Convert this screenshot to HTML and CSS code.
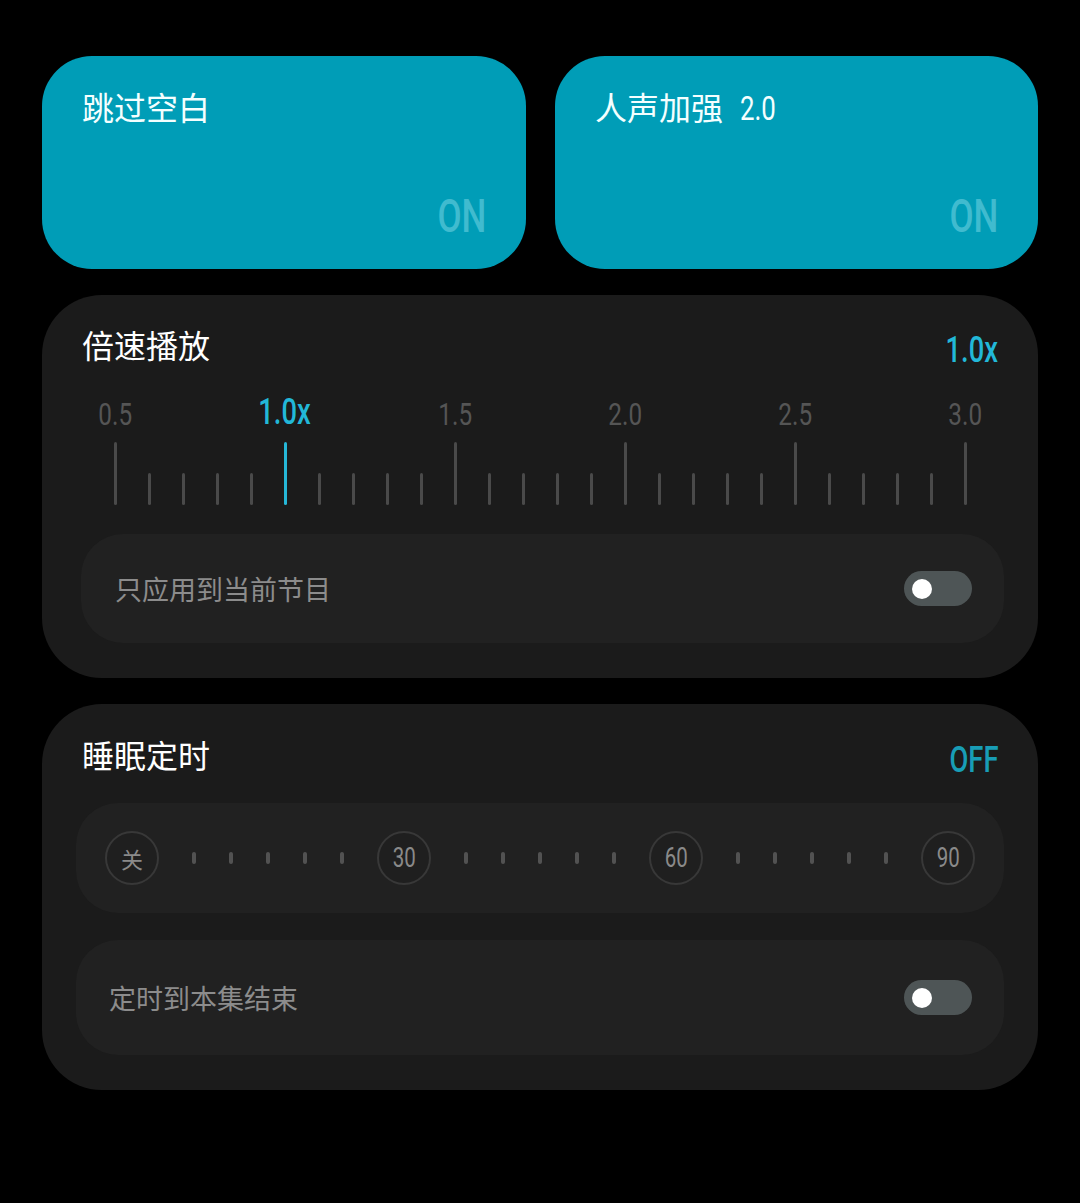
FILE: index.html
```html
<!DOCTYPE html>
<html lang="zh-CN">
<head>
<meta charset="utf-8">
<title>播放设置</title>
<link rel="stylesheet" href="styles.css">
</head>
<body>
<main class="page">
  <section class="quick-row">
    <div class="quick-card">
      <div class="quick-title">跳过空白</div>
      <div class="quick-state"><span class="num">ON</span></div>
    </div>
    <div class="quick-card">
      <div class="quick-title">人声加强<span class="num num-inline">2.0</span></div>
      <div class="quick-state"><span class="num">ON</span></div>
    </div>
  </section>

  <section class="panel speed">
    <header class="panel-head">
      <h2 class="panel-title">倍速播放</h2>
      <span class="panel-value"><span class="num">1.0x</span></span>
    </header>
    <div class="scale">
      <div class="scale-labels">
        <span class="scale-label"><span class="num">0.5</span></span>
        <span class="scale-label active"><span class="num">1.0x</span></span>
        <span class="scale-label"><span class="num">1.5</span></span>
        <span class="scale-label"><span class="num">2.0</span></span>
        <span class="scale-label"><span class="num">2.5</span></span>
        <span class="scale-label"><span class="num">3.0</span></span>
      </div>
      <div class="scale-ticks">
        <span class="tick major"></span><span class="tick"></span><span class="tick"></span><span class="tick"></span><span class="tick"></span>
        <span class="tick major active"></span><span class="tick"></span><span class="tick"></span><span class="tick"></span><span class="tick"></span>
        <span class="tick major"></span><span class="tick"></span><span class="tick"></span><span class="tick"></span><span class="tick"></span>
        <span class="tick major"></span><span class="tick"></span><span class="tick"></span><span class="tick"></span><span class="tick"></span>
        <span class="tick major"></span><span class="tick"></span><span class="tick"></span><span class="tick"></span><span class="tick"></span>
        <span class="tick major"></span>
      </div>
    </div>
    <div class="option-row option-speed">
      <span class="option-label">只应用到当前节目</span>
      <span class="toggle"><span class="knob"></span></span>
    </div>
  </section>

  <section class="panel sleep">
    <header class="panel-head">
      <h2 class="panel-title">睡眠定时</h2>
      <span class="panel-value off"><span class="num">OFF</span></span>
    </header>
    <div class="timer-row">
      <span class="stop cjk">关</span>
      <span class="dot"></span><span class="dot"></span><span class="dot"></span><span class="dot"></span><span class="dot"></span>
      <span class="stop"><span class="num">30</span></span>
      <span class="dot"></span><span class="dot"></span><span class="dot"></span><span class="dot"></span><span class="dot"></span>
      <span class="stop"><span class="num">60</span></span>
      <span class="dot"></span><span class="dot"></span><span class="dot"></span><span class="dot"></span><span class="dot"></span>
      <span class="stop"><span class="num">90</span></span>
    </div>
    <div class="option-row option-sleep">
      <span class="option-label">定时到本集结束</span>
      <span class="toggle"><span class="knob"></span></span>
    </div>
  </section>
</main>
</body>
</html>
```

FILE: styles.css
```css
* { box-sizing: border-box; }

html, body {
  margin: 0;
  padding: 0;
  background: #000;
}

body {
  font-family: "Noto Sans CJK SC", "Noto Sans", sans-serif;
  color: #fff;
  width: 1080px;
  height: 1203px;
  overflow: hidden;
}

/* condensed numerals */
.num {
  display: inline-block;
  font-family: Roboto, "Noto Sans", sans-serif;
  transform: scaleX(0.76);
  transform-origin: center;
  white-space: nowrap;
}

.page {
  padding: 56px 42px 0 42px;
  display: flex;
  flex-direction: column;
  gap: 26px;
}

/* Quick toggles */
.quick-row {
  display: grid;
  grid-template-columns: 484px 483px;
  column-gap: 29px;
}

.quick-card {
  height: 213px;
  background: #009db7;
  border-radius: 50px;
  padding: 30px 40px 30px 40px;
  display: flex;
  flex-direction: column;
  justify-content: space-between;
}

.quick-title {
  font-size: 32px;
  line-height: 40px;
  font-weight: 400;
  color: #f4ffff;
}

.num-inline {
  font-size: 34px;
  font-weight: 400;
  transform-origin: left center;
  margin-left: 17px;
}

.quick-state {
  align-self: flex-end;
  font-size: 46px;
  line-height: 46px;
  font-weight: 500;
  color: #40bbcf;
}

.quick-state .num { transform-origin: right center; }

/* Panels */
.panel {
  background: #1b1b1b;
  border-radius: 60px;
  padding: 29px 40px 35px 40px;
  display: flex;
  flex-direction: column;
}

.sleep { padding-top: 30px; }

.panel-head {
  display: flex;
  justify-content: space-between;
  align-items: center;
  height: 40px;
}

.panel-title {
  margin: 0;
  font-size: 32px;
  line-height: 40px;
  font-weight: 400;
  color: #fff;
}

.panel-value {
  font-size: 36px;
  line-height: 36px;
  font-weight: 500;
  color: #22b8d8;
  padding-top: 8px;
}

.panel-value .num { transform-origin: right center; }

.panel-value.off {
  color: #189db6;
}

/* Speed scale */
.scale {
  margin: 32px 0 0 16px;
  display: flex;
  flex-direction: column;
  gap: 10px;
}

.scale-labels {
  display: flex;
  gap: 136px;
  height: 36px;
  align-items: center;
}

.scale-label {
  width: 34px;
  display: flex;
  justify-content: center;
  white-space: nowrap;
  font-size: 32px;
  line-height: 36px;
  color: #555;
}

.scale-label.active {
  font-size: 36px;
  font-weight: 500;
  color: #22b8d8;
  padding-bottom: 4px;
}

.scale-ticks {
  display: flex;
  align-items: flex-end;
  height: 63px;
}

.tick {
  width: 34px;
  height: 32px;
  display: flex;
  justify-content: center;
}

.tick::before {
  content: "";
  width: 3px;
  height: 100%;
  border-radius: 2px;
  background: #4a4a4a;
}

.tick.major { height: 63px; }
.tick.active::before { background: #26b7d7; }

/* Option rows */
.option-row {
  background: #212121;
  border-radius: 42px;
  display: flex;
  align-items: center;
  justify-content: space-between;
}

.option-speed {
  margin: 29px -6px 0 -1px;
  height: 109px;
  padding: 0 32px 0 34px;
}

.option-sleep {
  margin: 27px -6px 0 -6px;
  height: 115px;
  padding: 0 32px 0 33px;
}

.option-label {
  font-size: 27px;
  line-height: 36px;
  color: #8c8c8c;
}

.toggle {
  width: 68px;
  height: 35px;
  border-radius: 18px;
  background: #4e5556;
  display: flex;
  align-items: center;
  padding-left: 8px;
}

.knob {
  width: 20px;
  height: 20px;
  border-radius: 50%;
  background: #fff;
}

/* Sleep timer */
.timer-row {
  margin: 29px -6px 0 -6px;
  height: 110px;
  background: #212121;
  border-radius: 42px;
  padding: 0 29px;
  display: flex;
  align-items: center;
  justify-content: space-between;
}

.stop {
  width: 54px;
  height: 54px;
  border-radius: 50%;
  border: 2px solid #383838;
  background: #1f1f1f;
  display: flex;
  align-items: center;
  justify-content: center;
  color: #8a8a8a;
  font-size: 27px;
  line-height: 1;
}

.stop.cjk {
  font-family: "Noto Sans CJK SC", sans-serif;
  font-size: 22px;
}

.dot {
  width: 4px;
  height: 12px;
  border-radius: 2px;
  background: #525252;
}
```
